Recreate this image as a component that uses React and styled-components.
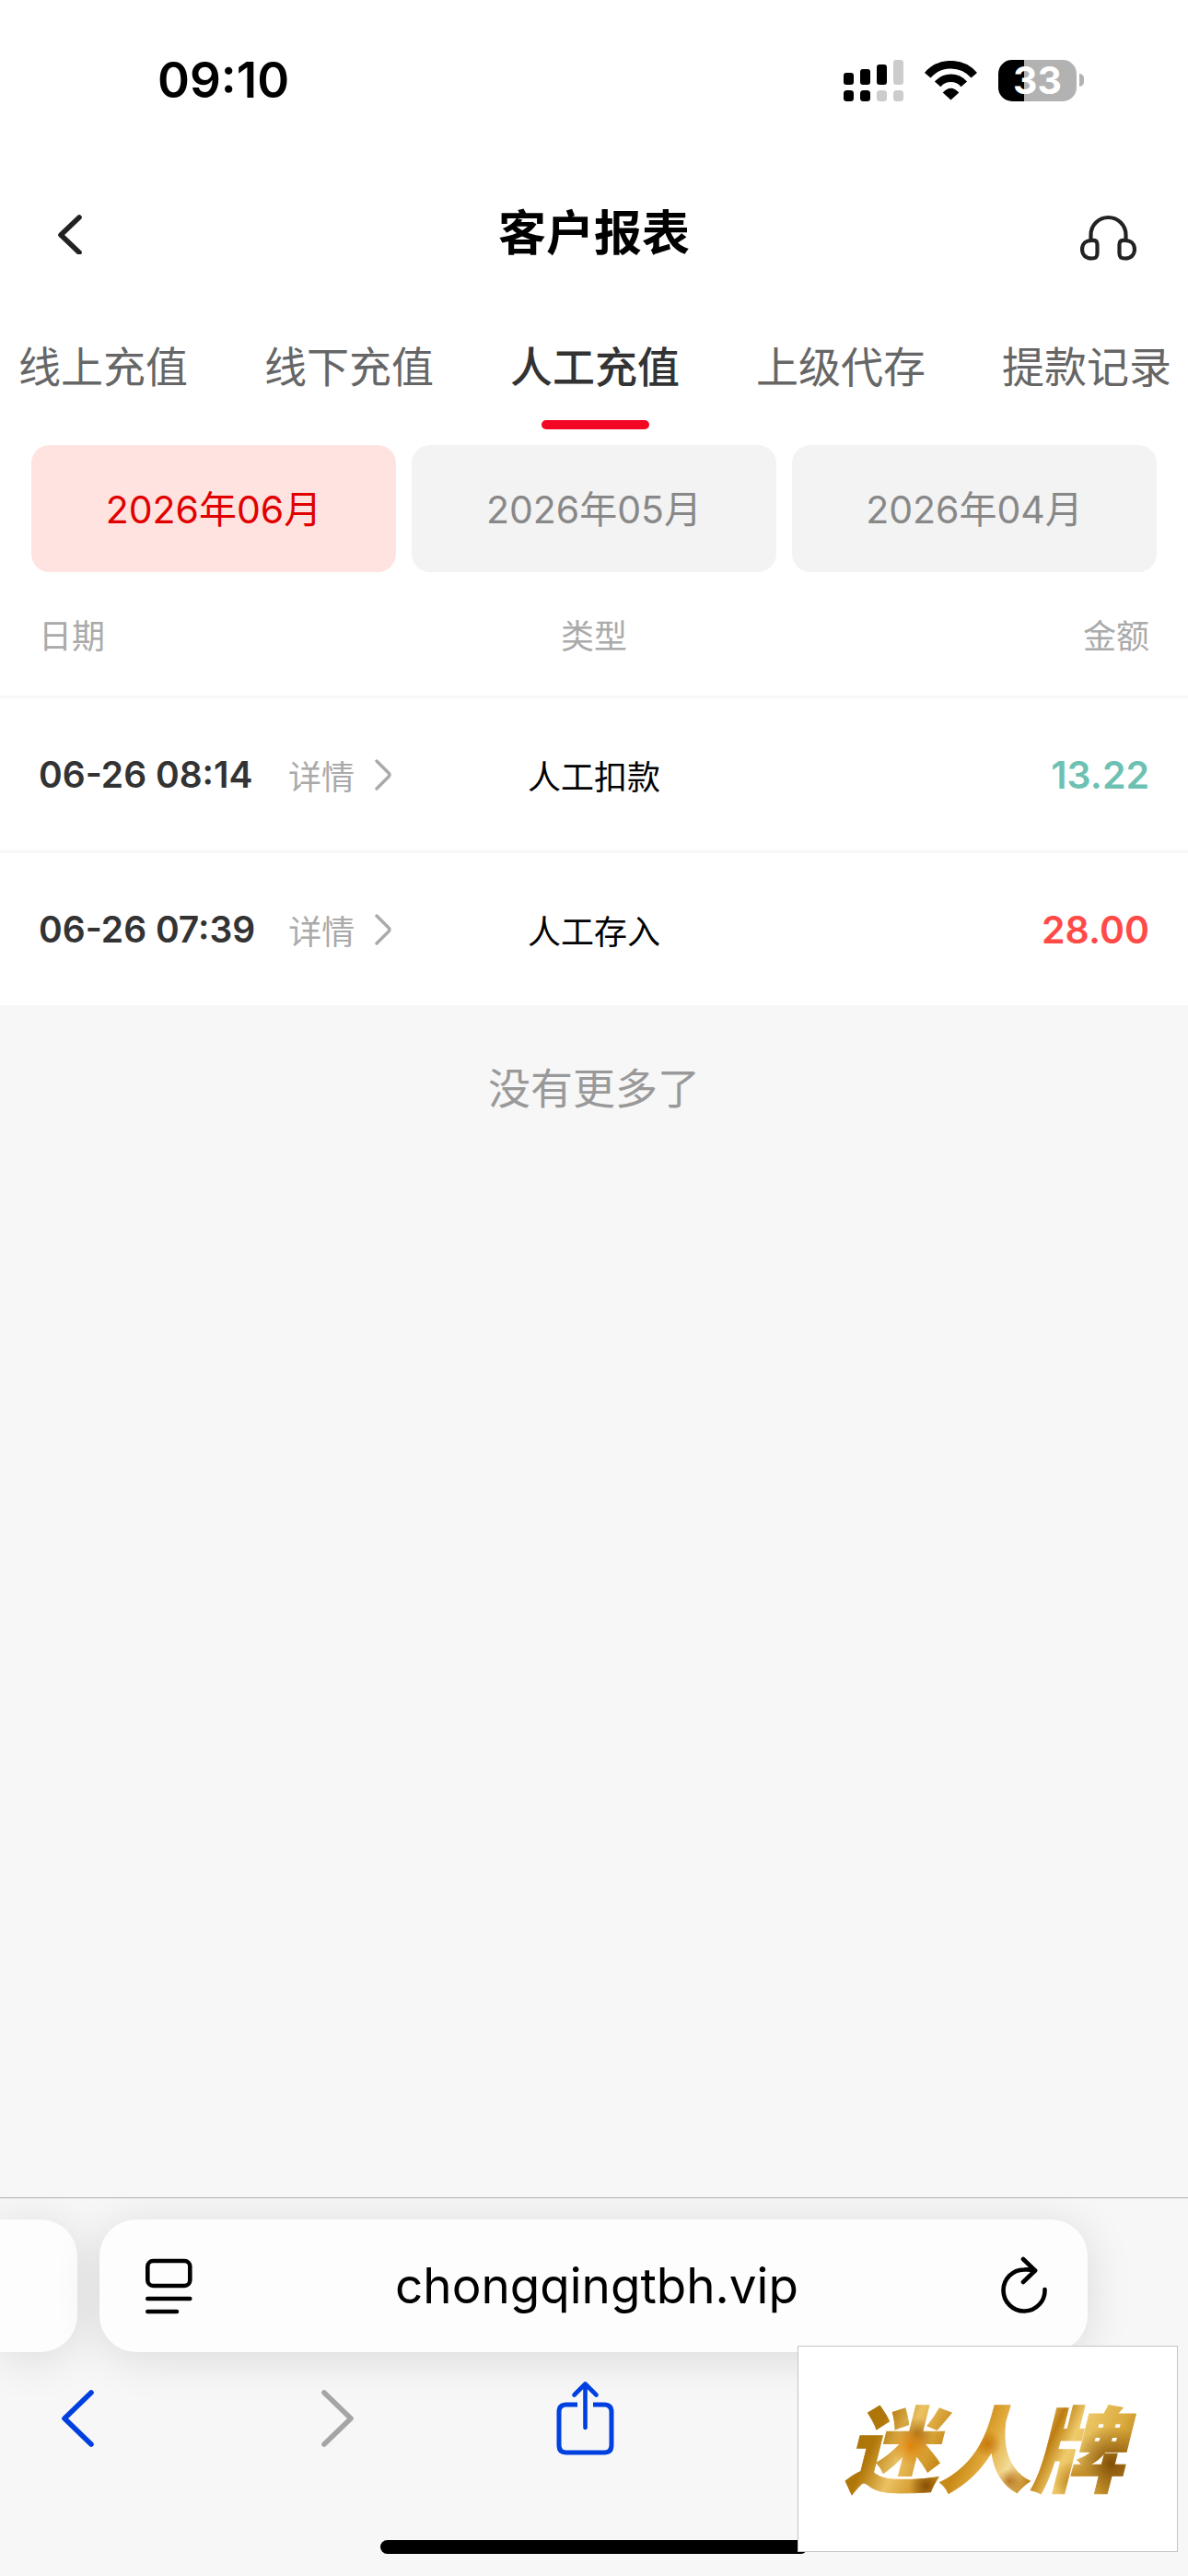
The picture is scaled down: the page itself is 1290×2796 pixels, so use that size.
import { useState } from 'react'
import styled, { createGlobalStyle } from 'styled-components'

const tabs = ['线上充值', '线下充值', '人工充值', '上级代存', '提款记录']
const months = ['2026年06月', '2026年05月', '2026年04月']

const records = [
  { date: '06-26 08:14', kind: '人工扣款', amount: '13.22', out: true },
  { date: '06-26 07:39', kind: '人工存入', amount: '28.00', out: false },
]

function App() {
  const [tab, setTab] = useState(2)
  const [month, setMonth] = useState(0)

  return (
    <Screen>
      <GlobalStyle />

      <Panel>
        <StatusBar>
          <Clock>09:10</Clock>
          <Signals>
            <SignalIcon />
            <WifiIcon />
            <Battery>
              <Charge>33</Charge>
              <Nub />
            </Battery>
          </Signals>
        </StatusBar>

        <Header>
          <IconButton aria-label="返回">
            <svg width="34" height="44" viewBox="-6 0 34 44" fill="none" stroke="#222" strokeWidth="5.6" strokeLinecap="round" strokeLinejoin="round">
              <path d="M24 4L4 23L24 42" />
            </svg>
          </IconButton>
          <Title>客户报表</Title>
          <IconButton aria-label="客服">
            <HeadphonesIcon />
          </IconButton>
        </Header>

        <Tabs>
          {tabs.map((t, i) => (
            <Tab key={t} $active={i === tab} onClick={() => setTab(i)}>
              {t}
            </Tab>
          ))}
        </Tabs>

        <Months>
          {months.map((m, i) => (
            <Month key={m} $active={i === month} onClick={() => setMonth(i)}>
              {m}
            </Month>
          ))}
        </Months>

        <Table>
          <thead>
            <tr>
              <Heading>日期</Heading>
              <Heading>类型</Heading>
              <Heading>金额</Heading>
            </tr>
          </thead>
          <tbody>
            {records.map((r) => (
              <tr key={r.date}>
                <Cell>
                  <DateLine>
                    <Time>{r.date}</Time>
                    <Detail>
                      详情
                      <svg width="18" height="34" viewBox="0 0 18 34" fill="none" stroke="#aaa" strokeWidth="3.4" strokeLinecap="round" strokeLinejoin="round">
                        <path d="M2 2L15 15Q17 17 15 19L2 32" />
                      </svg>
                    </Detail>
                  </DateLine>
                </Cell>
                <Cell>{r.kind}</Cell>
                <Cell><Amount $out={r.out}>{r.amount}</Amount></Cell>
              </tr>
            ))}
          </tbody>
        </Table>
      </Panel>

      <Feed>没有更多了</Feed>

      <Browser>
        <AddressRow>
          <PreviousPage />
          <Address>
            <IconButton aria-label="页面菜单">
              <ReaderIcon />
            </IconButton>
            <Site href="#">chongqingtbh.vip</Site>
            <IconButton aria-label="刷新">
              <ReloadIcon />
            </IconButton>
          </Address>
        </AddressRow>

        <Toolbar>
          <IconButton aria-label="后退">
            <svg width="36" height="62" viewBox="0 0 36 62" fill="none" stroke="#0040e0" strokeWidth="5.6" strokeLinecap="round" strokeLinejoin="round">
              <path d="M32 3L3 31L32 59" />
            </svg>
          </IconButton>
          <IconButton aria-label="前进" disabled>
            <svg width="36" height="62" viewBox="0 0 36 62" fill="none" stroke="#a5a5a5" strokeWidth="5.6" strokeLinecap="round" strokeLinejoin="round">
              <path d="M3 3L32 31L3 59" />
            </svg>
          </IconButton>
          <IconButton aria-label="分享">
            <ShareIcon />
          </IconButton>
        </Toolbar>

        <HomeBar />

        <Brand>
          <BrandName>迷人牌</BrandName>
        </Brand>
      </Browser>
    </Screen>
  )
}

// two SIMs: bars on top, dots below
const SignalIcon = () => (
  <svg width="65" height="45" viewBox="0 0 65 45">
    <rect x="0" y="14" width="11" height="13" rx="3" />
    <rect x="18" y="10" width="11" height="17" rx="3" />
    <rect x="36" y="5" width="11" height="22" rx="3" />
    <rect x="54" y="0" width="11" height="27" rx="3" fill="#ccc" />
    <rect x="0" y="33" width="11" height="12" rx="3.5" />
    <rect x="18" y="33" width="11" height="12" rx="3.5" />
    <rect x="36" y="33" width="11" height="12" rx="3.5" fill="#ccc" />
    <rect x="54" y="33" width="11" height="12" rx="3.5" fill="#ccc" />
  </svg>
)

const WifiIcon = () => (
  <svg width="57" height="43" viewBox="0 0 57 43" fill="none" stroke="#000" strokeWidth="8.6">
    <path d="M3.2 15.8A33.4 33.4 0 0 1 53.8 15.8" />
    <path d="M14.2 25.4A18.8 18.8 0 0 1 42.8 25.4" />
    <path d="M19.7 34.6Q28.5 25 37.3 34.6L28.5 42.5Z" fill="#000" stroke="none" />
  </svg>
)

const HeadphonesIcon = () => (
  <svg width="61" height="57" viewBox="0 -8 61 57" fill="none" stroke="#222" strokeWidth="4.2">
    <path d="M11.5 27V21A19 19 0 0 1 49.5 21V27" />
    <path d="M12.5 27C17 26.5 18.5 28 18.5 31.5V40.5C18.5 45 17 46.5 12.5 46.5C6 46.5 2 43 2 36.5C2 30.5 6 27 12.5 27Z" />
    <path d="M48.5 27C44 26.5 42.5 28 42.5 31.5V40.5C42.5 45 44 46.5 48.5 46.5C55 46.5 59 43 59 36.5C59 30.5 55 27 48.5 27Z" />
  </svg>
)

const ReaderIcon = () => (
  <svg width="51" height="61" viewBox="0 0 51 61" fill="none" stroke="#000" strokeWidth="4.6" strokeLinecap="round">
    <rect x="2.3" y="3" width="46" height="27" rx="6" />
    <path d="M2.3 44H48.3M2.3 58H34" />
  </svg>
)

// sits a little above the middle of the address card
const ReloadIcon = () => (
  <svg width="50" height="65" viewBox="0 0 50 65" fill="none" stroke="#000" strokeWidth="4.6" strokeLinecap="round" strokeLinejoin="round">
    <path d="M47.5 36A22.5 22.5 0 1 1 25 14.5Q31 14 37 15.5" />
    <path d="M24 3L37 15.5L24 28" />
  </svg>
)

const ShareIcon = () => (
  <svg width="64" height="82" viewBox="0 0 64 82" fill="none" stroke="#0040e0" strokeWidth="5" strokeLinecap="round" strokeLinejoin="round">
    <path d="M23 26H11Q3 26 3 34V70Q3 78 11 78H52Q60 78 60 70V34Q60 26 52 26H40" strokeLinecap="butt" />
    <path d="M31.5 51V4M19.5 15.5L31.5 3.5L43.5 15.5" strokeWidth="4.6" />
  </svg>
)

const GlobalStyle = createGlobalStyle`
* {
  box-sizing: border-box;
}

body {
  margin: 0;
  background: #f7f7f7;
  color: #000;
  font-family: Inter, "Noto Sans CJK SC", sans-serif;
}

button {
  border: 0;
  padding: 0;
  background: none;
  font: inherit;
}

svg {
  display: block;
}
`

const Screen = styled.div`
min-height: 100vh;
display: flex;
flex-direction: column;
`

const Panel = styled.main`
background: #fff;
`

const StatusBar = styled.div`
height: 174px;
display: flex;
align-items: center;
justify-content: space-between;
padding: 0 113px 0 171px;
`

const Clock = styled.time`
font-size: 53px;
font-weight: 600;
`

const Signals = styled.div`
display: flex;
align-items: center;
gap: 23px;
`

const Battery = styled.div`
display: flex;
align-items: center;
gap: 3px;
`

const Charge = styled.div`
width: 85px;
height: 45px;
border-radius: 15px;
background: linear-gradient(90deg, #000 33%, #b2b2b2 33%);
color: #fff;
font-size: 41px;
font-weight: 700;
line-height: 45px;
text-align: center;
`

const Nub = styled.div`
width: 5px;
height: 14px;
border-radius: 0 5px 5px 0;
background: #b2b2b2;
`

const Header = styled.header`
height: 160px;
display: grid;
grid-template-columns: 1fr auto 1fr;
align-items: center;
padding: 0 56px;

> :last-child {
  justify-self: end;
}
`

const IconButton = styled.button`
display: flex;
justify-self: start;
`

const Title = styled.h1`
margin: 0;
font-size: 52px;
line-height: 68px;
font-weight: 700;
`

const Tabs = styled.nav`
display: flex;
justify-content: space-between;
padding: 34px 18px 0 20px;
`

const Tab = styled.button`
display: flex;
flex-direction: column;
align-items: center;
font-size: 46px;
line-height: 60px;
font-weight: ${p => p.$active ? 500 : 400};
color: ${p => p.$active ? '#333' : '#666'};

&::after {
  content: "";
  width: 117px;
  height: 10px;
  margin-top: 28px;
  border-radius: 5px;
  background: ${p => p.$active ? '#f20822' : 'transparent'};
}
`

const Months = styled.div`
display: grid;
grid-template-columns: repeat(3, 1fr);
gap: 17px;
padding: 17px 34px 0;
`

const Month = styled.button`
height: 138px;
padding-bottom: 4px;
border-radius: 20px;
font-size: 41px;
background: ${p => p.$active ? '#ffe3e0' : '#f3f3f3'};
color: ${p => p.$active ? '#e00000' : '#888'};
`

const Table = styled.table`
width: 100%;
table-layout: fixed;
border-spacing: 0;
font-size: 36px;

th, td {
  padding: 0;
  text-align: center;
}

th:first-child, td:first-child {
  padding-left: 42px;
  text-align: left;
}

th:last-child, td:last-child {
  padding-right: 42px;
  text-align: right;
}
`

const Heading = styled.th`
height: 134px;
font-weight: 400;
color: #aaa;
`

const Cell = styled.td`
height: 168px;
border-top: 3px solid #f7f7f7;
`

const DateLine = styled.div`
display: flex;
align-items: center;
gap: 36px;
white-space: nowrap;
`

const Time = styled.time`
min-width: 235px;
font-size: 39px;
font-weight: 600;
color: #333;
`

const Detail = styled.button`
display: flex;
align-items: center;
gap: 22px;
color: #aaa;
`

const Amount = styled.span`
font-size: 41px;
font-weight: 600;
color: ${p => p.$out ? '#6dc1b3' : '#ff4a47'};
`

const Feed = styled.p`
flex: 1;
margin: 0;
padding-top: 60px;
font-size: 46px;
line-height: 60px;
text-align: center;
color: #999;
`

const Browser = styled.footer`
position: relative;
overflow: hidden;
border-top: 1px solid #b0b0b0;
padding: 23px 0 24px;
`

const AddressRow = styled.div`
display: grid;
grid-template-columns: 84px 1fr;
gap: 24px;
padding-right: 109px;
`

const Card = styled.div`
height: 144px;
border-radius: 40px;
background: #fdfdfd;
box-shadow: 0 6px 50px rgba(0, 0, 0, 0.12);
`

const PreviousPage = styled(Card)`
border-radius: 0 40px 40px 0;
`

const Address = styled(Card)`
display: flex;
align-items: center;
justify-content: space-between;
padding: 0 44px 0 50px;
`

const Site = styled.a`
font-size: 53px;
color: #000;
text-decoration: none;
`

const Toolbar = styled.div`
display: grid;
grid-template-columns: 282fr 255fr 685fr;
align-items: center;
padding: 31px 0 91px 67px;
`

const HomeBar = styled.div`
width: 36%;
height: 15px;
margin: 0 auto;
border-radius: 8px;
background: #000;
`

const Brand = styled.div`
position: absolute;
right: 11px;
bottom: 26px;
width: 413px;
height: 224px;
display: flex;
align-items: center;
justify-content: center;
border: 1px solid #c4c4c4;
background: #fff;
`

const BrandName = styled.strong`
padding: 4px 20px 0 12px;
font-size: 101px;
line-height: 130px;
font-weight: 900;
font-style: italic;
color: transparent;
-webkit-text-stroke: 1px transparent;
background:
  radial-gradient(circle at 25% 48%, rgba(222, 128, 6, 0.9), transparent 8%),
  radial-gradient(circle at 27% 38%, rgba(150, 88, 4, 0.7), transparent 7%),
  radial-gradient(circle at 30% 80%, rgba(120, 66, 2, 0.8), transparent 7%),
  radial-gradient(circle at 50% 46%, rgba(196, 108, 4, 0.8), transparent 8%),
  radial-gradient(circle at 57% 76%, rgba(170, 92, 4, 0.7), transparent 6%),
  radial-gradient(circle at 78% 76%, rgba(176, 110, 10, 0.8), transparent 8%),
  radial-gradient(circle at 90% 62%, rgba(122, 70, 2, 0.9), transparent 13%),
  linear-gradient(115deg, #a8740c 8%, #b07608 18%, #ecc262 27%, #c88a18 38%, #c88a18 44%, #e0a838 50%, #f3dc98 58%, #bd7d10 66%, #efcb6c 72%, #d9a93c 84%, #a46c0c 96%);
background-clip: text;
-webkit-background-clip: text;
`

export default App
